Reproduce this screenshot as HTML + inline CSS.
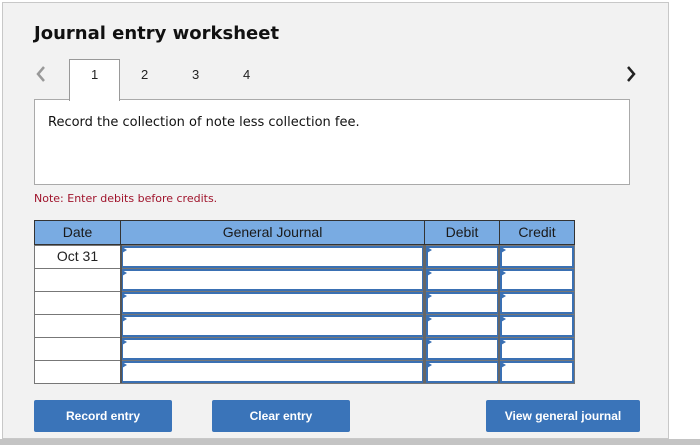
<!DOCTYPE html>
<html><head><style>
*{margin:0;padding:0;box-sizing:border-box}
body{width:700px;height:445px;background:#fff;position:relative;overflow:hidden;font-family:"DejaVu Sans",Verdana,sans-serif}
.a{position:absolute}
.panel{left:2px;top:2px;width:667px;height:437px;background:#f2f2f2;border:1px solid #c8c8c8}
.bar{left:0;top:439px;width:700px;height:6px;background:#c4c4c4}
.h1{left:34px;top:23px;font-size:18px;font-weight:bold;color:#111}
.tab{top:67px;font-size:13px;color:#222}
.c{font-family:"Liberation Sans",Arial,sans-serif}
.cell{position:absolute;border:1px solid #777;background:#fff}
.inp{position:absolute;border:2px solid #3a70b3;background:#fff}
.inp:before{content:"";position:absolute;left:-1px;top:-1px;border-left:5px solid #3a70b3;border-top:3px solid transparent;border-bottom:3px solid transparent}
.hd{position:absolute;top:220px;height:25px;background:#79abe2;border:1px solid #333;font:14px "Liberation Sans",Arial,sans-serif;color:#1a1a1a;text-align:center;line-height:23px}
.btn{position:absolute;top:400px;height:32px;background:#3a74b9;border-radius:2px;color:#fff;font:bold 12px "Liberation Sans",Arial,sans-serif;text-align:center;line-height:32px}
</style></head><body>
<div class="a panel"></div>
<div class="a bar"></div>
<div class="a h1">Journal entry worksheet</div>
<svg class="a" style="left:36px;top:66px" width="10" height="16"><path d="M8 1L2 8L8 15" fill="none" stroke="#999" stroke-width="2.5"/></svg>
<svg class="a" style="left:626px;top:66px" width="10" height="16"><path d="M2 1L8 8L2 15" fill="none" stroke="#222" stroke-width="2.5"/></svg>
<div class="a" style="left:34px;top:99px;width:596px;height:86px;background:#fff;border:1px solid #aaa"></div>
<div class="a" style="left:69px;top:59px;width:51px;height:42px;background:#fff;border:1px solid #999;border-bottom:none"></div>
<div class="a tab c" style="left:91px">1</div>
<div class="a tab c" style="left:141px">2</div>
<div class="a tab c" style="left:192px">3</div>
<div class="a tab c" style="left:243px">4</div>
<div class="a" style="left:48px;top:115px;font-size:13px;color:#111">Record the collection of note less collection fee.</div>
<div class="a" style="left:34px;top:192px;font-size:11px;color:#a0142c">Note: Enter debits before credits.</div>
<div class="hd" style="left:34px;width:87px">Date</div>
<div class="hd" style="left:120px;width:305px">General Journal</div>
<div class="hd" style="left:424px;width:76px">Debit</div>
<div class="hd" style="left:499px;width:76px">Credit</div>
<div id="rows"></div>
<script>
var h='';for(var i=0;i<6;i++){var y=245+i*23;
h+='<div class="cell" style="left:34px;top:'+y+'px;width:87px;height:24px;font:14px Liberation Sans,Arial,sans-serif;text-align:center;line-height:21px;color:#222">'+(i==0?'Oct 31':'')+'</div>';
h+='<div class="cell" style="left:120px;top:'+y+'px;width:455px;height:24px"></div>';
h+='<div class="inp" style="left:121px;top:'+(y+1)+'px;width:303px;height:22px"></div>';
h+='<div class="inp" style="left:426px;top:'+(y+1)+'px;width:73px;height:22px"></div>';
h+='<div class="inp" style="left:500px;top:'+(y+1)+'px;width:74px;height:22px"></div>';}
document.getElementById('rows').innerHTML=h;
</script>
<div class="a" style="left:120px;top:245px;width:2px;height:138px;background:#555"></div>
<div class="a" style="left:423px;top:245px;width:3px;height:138px;background:#666"></div>
<div class="a" style="left:498px;top:245px;width:2px;height:138px;background:#666"></div>
<div class="btn" style="left:34px;width:138px">Record entry</div>
<div class="btn" style="left:212px;width:138px">Clear entry</div>
<div class="btn" style="left:486px;width:154px">View general journal</div>
</body></html>
